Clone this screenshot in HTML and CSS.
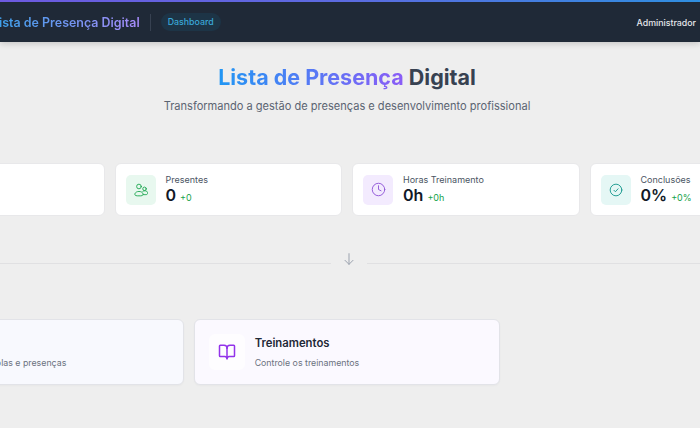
FILE: index.html
```html
<!doctype html>
<html>
<head>
<meta charset="utf-8">
<title>Lista de Presença Digital</title>
<link rel="stylesheet" href="styles.css">
</head>

<body>
<div class="topbar">
	<div class="brand">
		<span class="brand-name">Lista de Presença Digital</span>
		<span class="brand-sep"></span>
		<span class="badge">Dashboard</span>
	</div>
	<span class="user">Administrador</span>
</div>

<div class="wrap">
	<div class="hero">
		<h1><span class="grad">Lista de Presença</span> Digital</h1>
		<p>Transformando a gestão de presenças e desenvolvimento profissional</p>
	</div>

	<div class="stats">
		<div class="stat"></div>
		<div class="stat">
			<div class="stat-ico green">
				<svg viewBox="0 0 24 24"><circle cx="8.500" cy="6" r="4"/><circle cx="18" cy="10" r="3"/><path d="M5 22c-3 0-4-2-3.500-3.500C2.500 16 5 14.500 8.500 14.500s6 1.500 7 4c.5 1.500-.5 3.500-3.500 3.500z"/><path d="M15 14.500c1-.8 2.200-1.200 3.500-1.200 2.700 0 4.700 1.500 5 3.400.3 1.800-1 3.300-3 3.300h-4.500"/></svg>
			</div>
			<div>
				<div class="stat-label">Presentes</div>
				<div class="stat-val">0 <small>+0</small></div>
			</div>
		</div>
		<div class="stat">
			<div class="stat-ico purple">
				<svg viewBox="0 0 24 24"><circle cx="12" cy="12" r="10"/><path d="M12 6v6l4 2"/></svg>
			</div>
			<div>
				<div class="stat-label">Horas Treinamento</div>
				<div class="stat-val">0h <small>+0h</small></div>
			</div>
		</div>
		<div class="stat">
			<div class="stat-ico teal">
				<svg viewBox="0 0 24 24"><circle cx="12" cy="12" r="10"/><path d="M8.500 12.500l2.500 2.500 4.500-5"/></svg>
			</div>
			<div>
				<div class="stat-label">Conclusões</div>
				<div class="stat-val">0% <small>+0%</small></div>
			</div>
		</div>
	</div>

	<div class="divider">
		<span class="line"></span>
		<svg viewBox="0 0 24 24"><path d="M12 4v16"/><path d="M6 14l6 6 6-6"/></svg>
		<span class="line"></span>
	</div>

	<div class="actions">
		<div class="action blue">
			<div class="action-ico"></div>
			<div>
				<h3>&nbsp;</h3>
				<p>Gerenciar escolas e presenças</p>
			</div>
		</div>
		<div class="action violet">
			<div class="action-ico">
				<svg viewBox="0 0 24 24"><path d="M12 7v14"/><path d="M3 18a1 1 0 0 1-1-1V4a1 1 0 0 1 1-1h5a4 4 0 0 1 4 4 4 4 0 0 1 4-4h5a1 1 0 0 1 1 1v13a1 1 0 0 1-1 1h-6a3 3 0 0 0-3 3 3 3 0 0 0-3-3z"/></svg>
			</div>
			<div>
				<h3>Treinamentos</h3>
				<p>Controle os treinamentos</p>
			</div>
		</div>
	</div>
</div>
</body>
</html>
```

FILE: styles.css
```css
*{margin:0; padding:0; box-sizing:border-box;}
html,body{height:100%; overflow:hidden;}
body{background:#eee; font-family:Inter,"Liberation Sans",sans-serif; color:#111827;}
svg{fill:none; stroke:currentColor; stroke-width:2; stroke-linecap:round; stroke-linejoin:round; display:block;}

.topbar{height:42px; background:#1f2937; border-top:2px solid; border-image:linear-gradient(90deg,#6d5ae0,#5b6be0 50%,#2f8fe0) 1; display:flex; align-items:center; justify-content:space-between; padding-right:4px; box-shadow:0 2px 6px rgba(0,0,0,.16);}
.brand{display:flex; align-items:center; margin-left:-8px;}
.brand-name{font-size:12.450px; font-weight:600; background:linear-gradient(90deg,#38a0e8,#a78bfa); -webkit-background-clip:text; background-clip:text; color:transparent;}
.brand-sep{width:1px; height:17px; background:#374151; margin:0 10px;}
.badge{height:18px; line-height:18px; padding:0 7px; border-radius:9px; background:#1d3446; font-size:8.800px; font-weight:500; color:#3aa8d8;}
.user{font-size:8.800px; font-weight:500; color:#e5e7eb;}

.wrap{width:940px; margin-left:-123px;}
.hero{text-align:center; padding-top:21px;}
.hero h1{font-size:21.500px; line-height:29px; font-weight:700; color:#374151;}
.grad{background:linear-gradient(90deg,#2196f3,#8b5cf6); -webkit-background-clip:text; background-clip:text; color:transparent;}
.hero p{font-size:11.050px; line-height:16px; margin-top:6px; color:#5b6472;}

.stats{display:grid; grid-template-columns:repeat(4,1fr); gap:10px; margin-top:49px;}
.stat{height:53px; background:#fff; border:1px solid #e8e8ea; border-radius:6px; padding:0 10px; display:flex; align-items:center; gap:10px;}
.stat-ico{width:30px; height:30px; border-radius:5px; display:flex; align-items:center; justify-content:center;}
.stat-ico svg{width:14px; height:14px; stroke-width:1.500;}
.stat-ico.purple svg{width:15px; height:15px;}
.green{background:#e8f8ef; color:#16a34a;}
.purple{background:#f3ebfe; color:#9056d8;}
.teal{background:#e5f7f5; color:#0d9488;}
.stat-label{font-size:9px; line-height:11px; margin-top:2px; color:#4b5563;}
.stat-val{font-size:16px; line-height:20px; font-weight:600; color:#111827;}
.stat-val small{font-size:9px; font-weight:400; color:#16a34a;}

.divider{display:flex; align-items:center; gap:10px; margin-top:35px; padding-left:3px; color:#9ca3af;}
.divider svg{width:16px; height:16px; stroke-width:1.500; margin-bottom:8px;}
.line{flex:1; height:1px; background:#e0e0e2;}

.actions{display:grid; grid-template-columns:repeat(3,1fr); gap:10px; margin-top:44px;}
.action{height:66px; border:1px solid #e2e3e8; border-radius:6px; padding:0 14px; display:flex; align-items:center; gap:10px; box-shadow:0 1px 2px rgba(0,0,0,.03);}
.action.blue{background:#f8f9fe;}
.action.violet{background:#fbf9ff;}
.action-ico{width:36px; height:36px; border-radius:6px; background:#fefdff; color:#9333ea; display:flex; align-items:center; justify-content:center;}
.action-ico svg{width:18px; height:18px;}
.action h3{font-size:11.300px; line-height:16px; font-weight:600; color:#1f2937;}
.action p{font-size:8.800px; line-height:12px; margin-top:6px; color:#6b7280;}
```
